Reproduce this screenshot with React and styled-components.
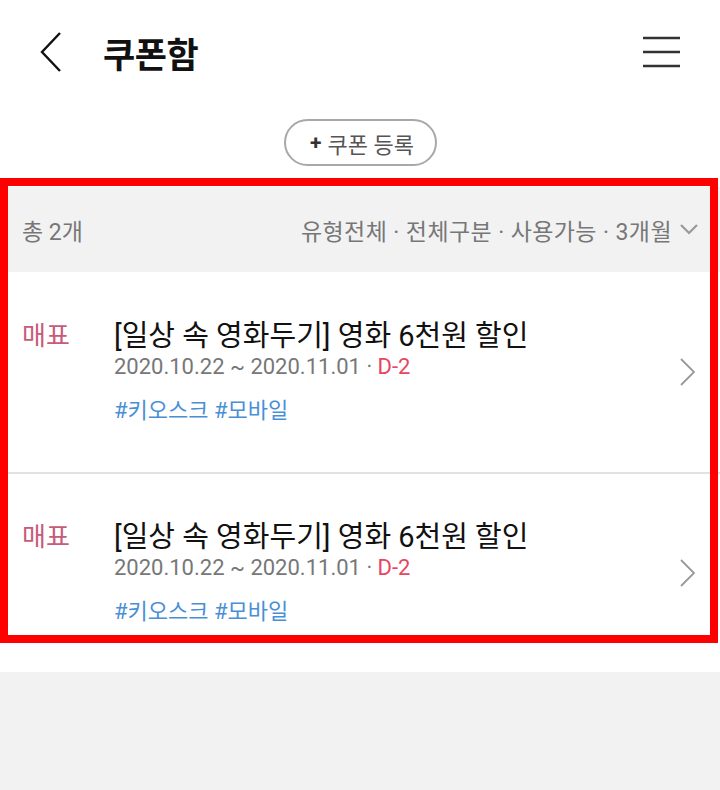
import React from "react";
import styled, { createGlobalStyle } from "styled-components";

const Global = createGlobalStyle`
  html, body { margin: 0; padding: 0; background: #f2f2f2; }
  body { font-family: Roboto, "Noto Sans CJK KR", sans-serif; }
  * { box-sizing: border-box; }
`;

const Page = styled.div`
  position: relative;
  width: 720px;
  min-height: 790px;
  background: #f2f2f2;
`;

const Top = styled.div`
  background: #fff;
`;

const Header = styled.header`
  height: 104px;
  display: flex;
  align-items: center;
  padding: 0 40px 0 40px;
`;

const IconBtn = styled.div`
  display: flex;
  align-items: center;
  justify-content: center;
  color: #111;
`;

const Title = styled.h1`
  margin: 0 0 0 41px;
  flex: 1;
  font-size: 35px;
  font-weight: 700;
  color: #111;
  letter-spacing: -0.5px;
`;

const RegisterRow = styled.div`
  display: flex;
  justify-content: center;
  padding: 15px 0 21px;
`;

const PillButton = styled.button`
  height: 47px;
  width: 153px;
  border: 2px solid #a8a8a8;
  border-radius: 24px;
  background: #fff;
  display: flex;
  align-items: center;
  justify-content: center;
  gap: 6px;
  font-family: Roboto, "Noto Sans CJK KR", sans-serif;
  font-size: 22px;
  color: #555;
  padding: 0 0 0 4px;
`;

const Plus = styled.span`
  font-weight: 700;
  color: #333;
  font-size: 21px;
`;

const FilterBar = styled.div`
  height: 85px;
  background: #f2f2f3;
  display: flex;
  align-items: center;
  justify-content: space-between;
  padding: 0 22px 0 22px;
  color: #777;
  font-size: 23px;
`;

const FilterRight = styled.div`
  display: flex;
  align-items: center;
  gap: 8px;
  letter-spacing: 0.4px;
`;

const List = styled.div`
  background: #fff;
`;

const Item = styled.div`
  height: 200px;
  display: flex;
  align-items: center;
  padding: 0 24px 0 22px;
  border-top: ${(p) => (p.$first ? "none" : "2px solid #e2e2e2")};
`;

const Body = styled.div`
  flex: 1;
  display: flex;
  align-items: flex-start;
`;

const Category = styled.div`
  width: 92px;
  font-size: 26px;
  color: #c85a7a;
  line-height: 34px;
`;

const Info = styled.div`
  display: flex;
  flex-direction: column;
`;

const ItemTitle = styled.div`
  font-size: 29px;
  color: #111;
  line-height: 34px;
`;

const DateLine = styled.div`
  font-size: 22px;
  color: #777;
  line-height: 28px;
`;

const DDay = styled.span`
  color: #e8455f;
`;

const Tags = styled.div`
  font-size: 22px;
  color: #4a8fd6;
  line-height: 28px;
  margin-top: 16px;
`;

const Overlay = styled.div`
  position: absolute;
  left: 0;
  top: 178px;
  width: 718px;
  height: 465px;
  border: 8px solid #ff0000;
  pointer-events: none;
`;

const BackIcon = () => (
  <svg width="22" height="40" viewBox="0 0 22 40">
    <polyline points="20,1 2,20 20,39" fill="none" stroke="#111" strokeWidth="2.4" />
  </svg>
);

const MenuIcon = () => (
  <svg width="37" height="32" viewBox="0 0 37 32">
    <g stroke="#333" strokeWidth="2.6">
      <line x1="0" y1="2" x2="37" y2="2" />
      <line x1="0" y1="16" x2="37" y2="16" />
      <line x1="0" y1="30" x2="37" y2="30" />
    </g>
  </svg>
);

const ChevronDown = () => (
  <svg width="18" height="11" viewBox="0 0 18 11">
    <polyline points="1,1 9,9 17,1" fill="none" stroke="#999" strokeWidth="2.2" />
  </svg>
);

const ChevronRight = () => (
  <svg width="16" height="28" viewBox="0 0 16 28">
    <polyline points="1,1 14,14 1,27" fill="none" stroke="#999" strokeWidth="1.8" />
  </svg>
);

const coupons = [
  { cat: "매표", title: "[일상 속 영화두기] 영화 6천원 할인", date: "2020.10.22 ~ 2020.11.01", dday: "D-2", tags: "#키오스크 #모바일" },
  { cat: "매표", title: "[일상 속 영화두기] 영화 6천원 할인", date: "2020.10.22 ~ 2020.11.01", dday: "D-2", tags: "#키오스크 #모바일" },
];

export default function App() {
  return (
    <Page>
      <Global />
      <Top>
        <Header>
          <IconBtn><BackIcon /></IconBtn>
          <Title>쿠폰함</Title>
          <IconBtn><MenuIcon /></IconBtn>
        </Header>
        <RegisterRow>
          <PillButton><Plus>+</Plus>쿠폰 등록</PillButton>
        </RegisterRow>
      </Top>
      <FilterBar>
        <span>총 2개</span>
        <FilterRight>
          <span>유형전체 · 전체구분 · 사용가능 · 3개월</span>
          <ChevronDown />
        </FilterRight>
      </FilterBar>
      <List>
        {coupons.map((c, i) => (
          <Item key={i} $first={i === 0}>
            <Body>
              <Category>{c.cat}</Category>
              <Info>
                <ItemTitle>{c.title}</ItemTitle>
                <DateLine>
                  {c.date} · <DDay>{c.dday}</DDay>
                </DateLine>
                <Tags>{c.tags}</Tags>
              </Info>
            </Body>
            <ChevronRight />
          </Item>
        ))}
      </List>
      <Overlay />
    </Page>
  );
}
